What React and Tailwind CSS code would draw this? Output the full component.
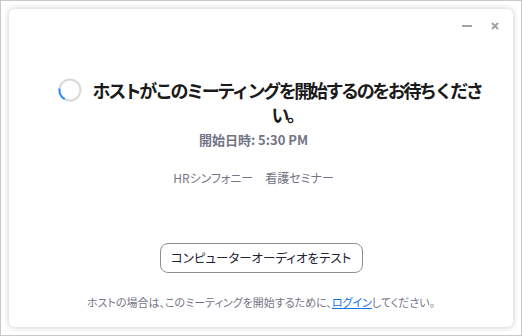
const jp = "font-['Noto_Sans_CJK_JP','Noto_Sans',sans-serif]";

function Spinner() {
  return (
    <svg width="24" height="24" viewBox="0 0 24 24" className="shrink-0">
      <circle cx="12" cy="12" r="10.5" fill="none" stroke="#d9d9d9" strokeWidth="2" />
      <path d="M1.6 10.5 A10.5 10.5 0 0 0 6.75 21.09" fill="none" stroke="#2d8cff" strokeWidth="2" />
    </svg>
  );
}

export default function App() {
  return (
    <div className={`w-[522px] h-[336px] border border-[#c9c9c9] bg-white p-2 ${jp}`}>
      <div className="flex h-full flex-col rounded-md bg-white shadow-[0_0_6px_rgba(0,0,0,0.22)]">
        {/* window controls */}
        <div className="flex h-[33px] items-center justify-end gap-[19px] pr-[14px]">
          <div className="h-[2px] w-[10px] bg-[#a3a3a3]" />
          <svg width="8" height="8" viewBox="0 0 8 8">
            <path d="M1 1 L7 7 M7 1 L1 7" stroke="#a3a3a3" strokeWidth="2" />
          </svg>
        </div>

        <div className="mt-[36px] ml-[49px] flex items-start gap-[5px]">
          <Spinner />
          <p className="w-[400px] text-center text-[18px] leading-6 font-bold tracking-[-2.4px] text-[#1a1a1a]">
            ホストがこのミーティングを開始するのをお待ちくださ
            <br />
            い。
          </p>
        </div>

        <div className="flex flex-col items-center">
          <p className="mt-1 mr-[15px] text-[13px] leading-[19px] font-bold text-[#747487]">
            開始日時: 5:30 PM
          </p>
          <p className="mt-[20px] mr-[15px] text-[12px] leading-[18px] text-[#747487] [font-feature-settings:'palt']">
            HRシンフォニー　看護セミナー
          </p>

          <button className="mt-[56px] h-[30px] w-[203px] rounded-lg border border-[#8f8f8f] bg-white text-[12.5px] text-[#232333] [font-feature-settings:'palt']">
            コンピューターオーディオをテスト
          </button>

          <p className="mt-[21px] text-[11px] leading-4 text-[#747487] [font-feature-settings:'palt']">
            ホストの場合は、このミーティングを開始するために、
            <span className="text-[#0e71eb] underline">ログイン</span>
            してください。
          </p>
        </div>
      </div>
    </div>
  );
}
